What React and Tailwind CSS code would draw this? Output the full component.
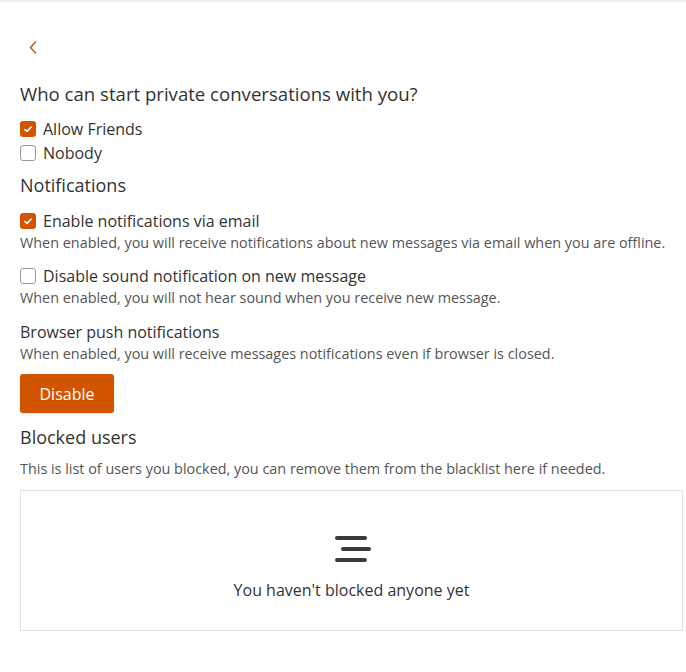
import React from "react";

function Check({ checked, label }) {
  return (
    <label className="flex items-center h-6 text-[16px] text-[#333]">
      {checked ? (
        <span className="w-4 h-4 rounded-[3px] bg-[#d35400] flex items-center justify-center">
          <svg width="8" height="7" viewBox="0 0 8 7" fill="none">
            <path d="M1 3.6 L3 5.4 L7 1.2" stroke="#fff" strokeWidth="1.6" strokeLinecap="round" strokeLinejoin="round" />
          </svg>
        </span>
      ) : (
        <span className="w-4 h-4 rounded-[3px] border border-[#9a9a9a] bg-white" />
      )}
      <span className="ml-[7px]">{label}</span>
    </label>
  );
}

export default function App() {
  return (
    <div className="min-h-screen bg-white border-t-2 border-[#f0f0f0] px-5 font-['Open_Sans',sans-serif]">
      {/* back */}
      <div className="pt-[39px] pl-[9px] h-[80px]">
        <svg width="8" height="13" viewBox="0 0 8 13" fill="none">
          <path d="M6.5 1 L1.5 6.5 L6.5 12" stroke="#d35400" strokeWidth="1.5" strokeLinecap="round" strokeLinejoin="round" />
        </svg>
      </div>

      <h2 className="text-[18.6px] leading-6 text-[#333]">Who can start private conversations with you?</h2>
      <div className="mt-[11px]">
        <Check checked label="Allow Friends" />
        <Check label="Nobody" />
      </div>

      <h3 className="mt-2 text-[18px] leading-6 text-[#333]">Notifications</h3>

      <div className="mt-3">
        <Check checked label="Enable notifications via email" />
        <p className="text-[14.4px] leading-[19px] text-[#555]">
          When enabled, you will receive notifications about new messages via email when you are offline.
        </p>
      </div>

      <div className="mt-3">
        <Check label="Disable sound notification on new message" />
        <p className="text-[14.4px] leading-[19px] text-[#555]">
          When enabled, you will not hear sound when you receive new message.
        </p>
      </div>

      <div className="mt-[13px]">
        <div className="text-[16px] leading-6 text-[#333]">Browser push notifications</div>
        <p className="text-[14.4px] leading-[19px] text-[#555]">
          When enabled, you will receive messages notifications even if browser is closed.
        </p>
      </div>

      <button className="mt-[11px] h-[39px] w-[94px] rounded-[3px] bg-[#d35400] text-white text-[16px] shadow-sm">
        Disable
      </button>

      <h3 className="mt-3 text-[18px] leading-6 text-[#333]">Blocked users</h3>
      <p className="mt-[10px] text-[14.4px] leading-[19px] text-[#555]">
        This is list of users you blocked, you can remove them from the blacklist here if needed.
      </p>

      <div className="mt-3 w-[663px] h-[141px] border border-[#e3e3e3] flex flex-col items-center">
        <svg className="mt-[44px]" width="40" height="28" viewBox="0 0 40 28" fill="none">
          <path d="M5 3 H33 M11 14 H37 M5 25 H33" stroke="#3a3a3a" strokeWidth="4" strokeLinecap="round" />
        </svg>
        <div className="mt-[15px] text-[16px] leading-6 text-[#333]">You haven't blocked anyone yet</div>
      </div>
    </div>
  );
}
